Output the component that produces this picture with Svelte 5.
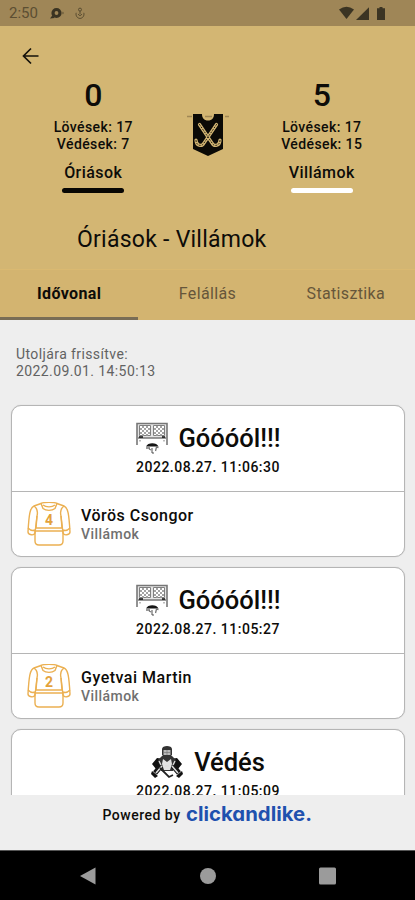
<script lang="ts">
    type Team = {
        name: string;
        score: number;
        shots: number;
        saves: number;
        color: string;
    };

    type MatchEvent = {
        kind: 'goal' | 'save';
        title: string;
        time: string;
        player?: string;
        team?: string;
        jersey?: number;
    };

    const home: Team = { name: 'Óriások', score: 0, shots: 17, saves: 7, color: '#080704' };
    const away: Team = { name: 'Villámok', score: 5, shots: 17, saves: 15, color: '#ffffff' };

    const tabs = ['Idővonal', 'Felállás', 'Statisztika'];
    let activeTab = $state(0);

    const events: MatchEvent[] = [
        {
            kind: 'goal',
            title: 'Góóóól!!!',
            time: '2022.08.27. 11:06:30',
            player: 'Vörös Csongor',
            team: 'Villámok',
            jersey: 4,
        },
        {
            kind: 'goal',
            title: 'Góóóól!!!',
            time: '2022.08.27. 11:05:27',
            player: 'Gyetvai Martin',
            team: 'Villámok',
            jersey: 2,
        },
        { kind: 'save', title: 'Védés', time: '2022.08.27. 11:05:09' },
    ];
</script>

{#snippet teamScore(team: Team)}
    <div class="team">
        <span class="team__score">{team.score}</span>
        <span class="team__stat">Lövések: {team.shots}</span>
        <span class="team__stat">Védések: {team.saves}</span>
        <span class="team__name">{team.name}</span>
        <span class="team__color" style="background: {team.color}"></span>
    </div>
{/snippet}

<div class="app">
    <div class="status">
        <span class="status__time">2:50</span>
        <svg class="status__app" width="15" height="13" viewBox="0 0 15 13">
            <circle cx="6.500" cy="6" r="3.500" fill="none" stroke="#3a3322" stroke-width="3.200" />
            <path d="M0 11.500 2.600 8l2 3z" fill="#3a3322" />
            <circle cx="12.800" cy="6" r="1.200" fill="#7b6843" />
        </svg>
        <svg class="status__sync" width="10" height="13" viewBox="0 0 10 13" fill="none" stroke="#594c30">
            <circle cx="5" cy="2.600" r="1.500" />
            <path d="M1.200 5.800c-.8 3 1.200 5.600 3.800 5.600s4.600-2.600 3.800-5.600M3 7.200l2 1.500 2-1.500M5 4v3" />
        </svg>
        <svg class="status__signals" width="48" height="15" viewBox="0 0 48 15" fill="#3b3423">
            <path d="M0 3.600Q7.500-2.200 15 3.600L7.500 13z" />
            <path d="M30 1.200V14H17z" />
            <path d="M38 2.300h2.500V1h3v1.300H46V14h-8z" />
        </svg>
    </div>

    <header class="header">
        <button class="back" aria-label="Vissza">
            <svg width="18" height="18" viewBox="0 0 18 18" fill="none" stroke="#15120b" stroke-width="1.7">
                <path d="M17.500 9H2.500M10 1.500 2.500 9 10 16.500" />
            </svg>
        </button>

        <div class="scoreboard">
            {@render teamScore(home)}
            <svg class="crest" width="42" height="44" viewBox="0 0 42 44">
                <path d="M0 3.500h5M18 3.500h7M38 3.500h4" stroke="#9f8755" stroke-width="1.500" />
                <path d="M6 1h9c0 4 2 6.500 6 6.500S27 5 27 1h9v35l-15 7-15-7z" fill="#0b0a06" />
                <g fill="none" stroke="#d3b673" stroke-linecap="round">
                    <g stroke-width="3.200">
                        <path d="M12.500 11.500 25 30c2 4 8 3 8-3" />
                        <path d="M29.500 11.500 17 30c-2 4-8 3-8-3" />
                    </g>
                    <g stroke="#0b0a06" stroke-width=".900" stroke-dasharray="1 2">
                        <path d="M12.500 11.500 25 30c2 4 8 3 8-3" />
                        <path d="M29.500 11.500 17 30c-2 4-8 3-8-3" />
                    </g>
                </g>
            </svg>
            {@render teamScore(away)}
        </div>

        <h1 class="header__title">{home.name} - {away.name}</h1>
    </header>

    <div class="tabs" role="tablist">
        {#each tabs as tab, i}
            <button
                class="tabs__tab"
                class:tabs__tab--active={activeTab === i}
                role="tab"
                aria-selected={activeTab === i}
                onclick={() => (activeTab = i)}
            >
                {tab}
            </button>
        {/each}
    </div>

    <main class="timeline">
        <p class="updated">Utoljára frissítve:<br /><span class="updated__time">2022.09.01. 14:50:13</span></p>

        {#each events as event}
            <article class="card">
                <div class="card__head">
                    <div class="card__title">
                        {#if event.kind === 'goal'}
                            <svg width="32" height="33" viewBox="0 0 32 33">
                                <path d="M1 1h30v15H1z" fill="#e4e4e4" />
                                <g fill="none">
                                    <path d="M1 23V1.500h30V23" stroke="#777" stroke-width="1.600" />
                                    <path d="M3.500 3.500h11v10h-11zM17.500 3.500h11v10h-11z" fill="#fff" stroke="#808080" />
                                    <path
                                        d="m4 6 8 8M4 10l4 4M6 4l8 8M10 4l4 4M4 8l4-4M4 12l8-8M6 14l8-8M10 14l4-4M18 6l8 8M18 10l4 4M20 4l8 8M24 4l4 4M18 8l4-4M18 12l8-8M20 14l8-8M24 14l4-4"
                                        stroke="#999"
                                        stroke-width=".900"
                                    />
                                    <path d="M2 16h28" stroke="#777" stroke-width="1.300" />
                                    <path d="M3 15h4M26 15h3" stroke="#111" stroke-width="1.500" />
                                    <path d="M4 18v1.500M28 18v1.500" stroke="#777" />
                                </g>
                                <path d="M10 24.500c1.500-4.500 11-4.500 12.500 0z" fill="#161616" />
                                <path d="M10 26h4M13 27l2 1M16 26v5M17 32v-2M19.500 29l1-4 2 .500" fill="none" stroke="#777" stroke-width="1.300" />
                            </svg>
                        {:else}
                            <svg width="32" height="33" viewBox="0 0 32 33">
                                <path d="M6 12 1 18l4 5 5-3 3-7zM26 12l5 6-4 5-5-3-3-7z" fill="#111" />
                                <path d="M11 10h10l4 4-3 11h-12L7 14z" fill="#333" />
                                <path d="m12 13 4 3 4-3 1 5-2 6h-6l-2-6z" fill="#e2e2e2" />
                                <path d="M11 3c0-4 10-4 10 0v6l-3 3h-4l-3-3z" fill="#333" />
                                <path d="M12.500 4h7v5h-7z" fill="#b8b8b8" />
                                <path d="M13 6.500h6M16 4v5" stroke="#777" stroke-width=".700" />
                                <path d="m8 15 2 4M24 15l-2 4M14 20h4" stroke="#ddd" stroke-width="1.300" />
                                <path d="m10 20-6 7M22 20l6 7" stroke="#151515" stroke-width="5" />
                                <path d="m11 20-6 7M21 20l6 7" stroke="#ddd" stroke-width="1.500" />
                                <path d="m1 25 6 5-3 2-4-4zM31 25l-6 5 3 2 4-4z" fill="#111" />
                                <path d="m9 22 9 9 4-2" fill="none" stroke="#222" stroke-width="1.800" />
                            </svg>
                        {/if}
                        <span>{event.title}</span>
                    </div>
                    <time class="card__time">{event.time}</time>
                </div>
                {#if event.player}
                    <div class="card__player">
                        <svg width="44" height="44" viewBox="0 0 44 44" fill="none" stroke="#ebb052" stroke-width="1.400" stroke-linejoin="round">
                            <path d="M14 1.500 7 4C3 5.500 2 12 1 30c0 3 6 4 7 1l2-17" />
                            <path d="M30 1.500 37 4c4 1.500 5 8 6 26 0 3-6 4-7 1l-2-17" />
                            <path d="M14 1.500c3-1.500 13-1.500 16 0l-2 5c-3 2.500-9 2.500-12 0zM16 3c3 2.500 9 2.500 12 0" />
                            <path d="M7 4c4 3 4 6 3 10l-1 12h26l-1-12c-1-4-1-7 3-10M8 29h28M1 26c2 2 5 3 7 2M43 26c-2 2-5 3-7 2" />
                            <path d="M8 29v10c0 3 1 4 4 4h20c3 0 4-1 4-4V29" />
                            <text x="22" y="23" text-anchor="middle" class="jersey-number">{event.jersey}</text>
                        </svg>
                        <div class="player">
                            <span class="player__name">{event.player}</span>
                            <span class="player__team">{event.team}</span>
                        </div>
                    </div>
                {/if}
            </article>
        {/each}
    </main>

    <footer class="powered">
        <span class="powered__label">Powered by</span>
        <svg class="powered__brand" width="127" height="24" viewBox="0 0 127 24">
            <text x="0" y="18" textLength="126" lengthAdjust="spacingAndGlyphs">clickandlike.</text>
        </svg>
    </footer>

    <nav class="navbar">
        <svg width="16" height="18" viewBox="0 0 16 18" fill="#9b9b9b"><path d="M15.500.500v17L0 9z" /></svg>
        <svg width="16" height="18" viewBox="0 0 16 18" fill="#9b9b9b"><circle cx="8" cy="9" r="8" /></svg>
        <svg width="17" height="18" viewBox="0 0 17 18" fill="#9b9b9b"><rect y=".500" width="17" height="17" rx="1.500" /></svg>
    </nav>
</div>

<style>
    :global(body) {
        margin: 0;
    }

    .app {
        display: flex;
        flex-direction: column;
        width: 415px;
        height: 900px;
        overflow: hidden;
        background: #eeeeee;
        color: #0d0c09;
        font-family: Roboto, 'Liberation Sans', sans-serif;
    }

    button {
        padding: 0;
        border: 0;
        background: none;
        color: inherit;
        font: inherit;
        cursor: pointer;
    }

    .status {
        display: flex;
        align-items: center;
        box-sizing: border-box;
        flex: none;
        height: 26px;
        padding: 0 28px 0 9px;
        background: #9f8657;
    }

    .status__time {
        width: 41px;
        font-size: 15px;
        line-height: 26px;
        color: #5c4e32;
    }

    .status__sync {
        margin-left: 10px;
    }

    .status__signals {
        margin-left: auto;
    }

    .header {
        box-sizing: border-box;
        flex: none;
        height: 243px;
        background: #d3b673;
    }

    .back {
        display: block;
        width: 18px;
        height: 18px;
        margin: 21px 0 0 21px;
    }

    .scoreboard {
        display: grid;
        grid-template-columns: 1fr 42px 1fr;
        padding-top: 10px;
    }

    .team {
        display: flex;
        flex-direction: column;
        align-items: center;
        font-weight: 500;
    }

    .team__score {
        height: 44px;
        font-size: 32px;
        line-height: 41px;
    }

    .team__stat {
        font-size: 14px;
        line-height: 16.5px;
        letter-spacing: 0.4px;
    }

    .team__name {
        margin-top: 11px;
        font-size: 16px;
        line-height: 20px;
        letter-spacing: 0.45px;
    }

    .team__color {
        width: 62px;
        height: 5px;
        margin-top: 5px;
        border-radius: 3px;
    }

    .crest {
        margin-top: 38px;
    }

    .header__title {
        margin: 33px 0 0 77px;
        font-size: 23px;
        font-weight: 400;
        line-height: 28px;
        letter-spacing: 0.25px;
    }

    .tabs {
        display: grid;
        grid-template-columns: repeat(3, 1fr);
        flex: none;
        height: 51px;
        background: #d3b470;
        box-shadow: inset 0 1px #dab971;
    }

    .tabs__tab {
        border-bottom: 3px solid transparent;
        color: #66563a;
        font-size: 16px;
        letter-spacing: 0.35px;
    }

    .tabs__tab--active {
        border-bottom-color: #796d55;
        color: #0d0c09;
        font-weight: 700;
    }

    .timeline {
        flex: 1;
        min-height: 0;
        padding: 26px 10px 0 11px;
        overflow: hidden;
    }

    .updated {
        margin: 0 0 26px 5px;
        color: #626262;
        font-size: 14px;
        line-height: 16.5px;
        letter-spacing: 0.4px;
    }

    .card {
        box-sizing: border-box;
        height: 152px;
        margin-bottom: 10px;
        border: 1px solid #b5b5b5;
        border-radius: 10px;
        background: #ffffff;
        box-shadow: 0 0 1px #bdbdbd;
        overflow: hidden;
    }

    .card__head {
        display: flex;
        flex-direction: column;
        align-items: center;
        box-sizing: border-box;
        height: 86px;
        padding-top: 15px;
        border-bottom: 1px solid #b5b5b5;
    }

    .card__title {
        display: flex;
        align-items: center;
        gap: 11px;
        height: 34px;
        font-size: 25.5px;
        font-weight: 500;
        line-height: 30px;
    }

    .card__time {
        margin-top: 4px;
        font-size: 14px;
        font-weight: 500;
        line-height: 17px;
        letter-spacing: 0.5px;
    }

    .card__player {
        display: flex;
        align-items: center;
        gap: 10px;
        height: 64px;
        padding-left: 15px;
    }

    .jersey-number {
        fill: #e3a23b;
        stroke: none;
        font-size: 14px;
        font-weight: 700;
    }

    .player {
        display: flex;
        flex-direction: column;
        padding-top: 1px;
    }

    .player__name {
        font-size: 16px;
        font-weight: 500;
        line-height: 19px;
        letter-spacing: 0.5px;
    }

    .player__team {
        color: #707070;
        font-size: 14px;
        font-weight: 500;
        line-height: 18px;
        letter-spacing: 0.45px;
    }

    .powered {
        display: flex;
        align-items: center;
        justify-content: center;
        gap: 5px;
        box-sizing: border-box;
        flex: none;
        height: 55px;
        padding-bottom: 16px;
    }

    .powered__label {
        font-size: 14px;
        font-weight: 500;
        letter-spacing: 0.5px;
    }

    .powered__brand {
        fill: #1f51ae;
        font-family: Inter, sans-serif;
        font-feature-settings: 'cv11';
        font-size: 20px;
        font-weight: 700;
    }

    .navbar {
        display: flex;
        align-items: center;
        justify-content: space-between;
        box-sizing: border-box;
        flex: none;
        height: 50px;
        padding: 0 79px 0 80px;
        border-top: 1px solid #555555;
        background: #000000;
    }
</style>
